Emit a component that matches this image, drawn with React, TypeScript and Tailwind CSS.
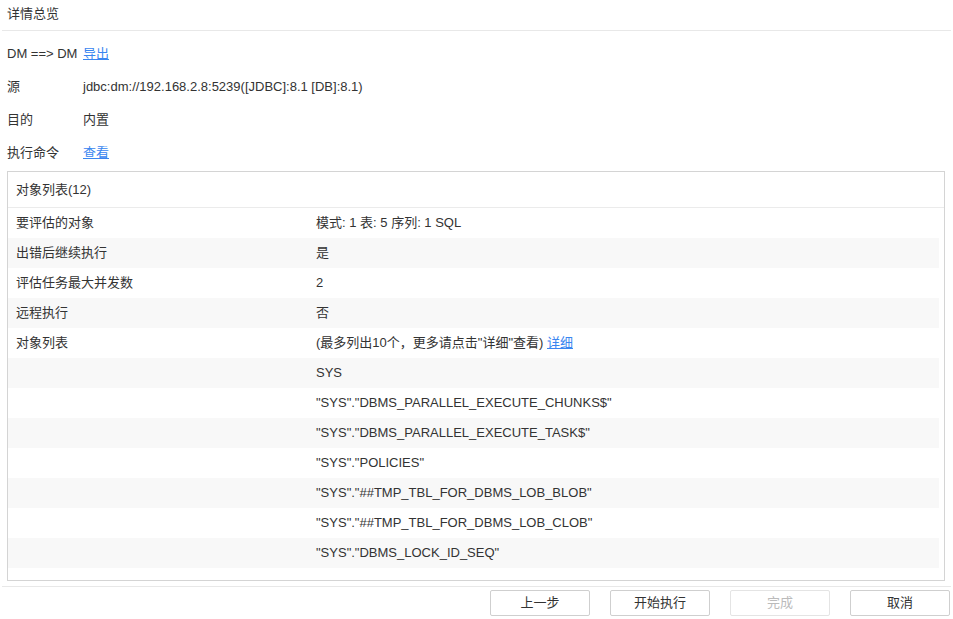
import React from 'react';

const font = { fontFamily: '"Liberation Sans", Arial, "Noto Sans CJK SC", sans-serif' };

const infoRows: { label: string; value: React.ReactNode }[] = [
  {
    label: 'DM ==> DM',
    value: <a className="text-[#3a86f0] underline cursor-pointer">导出</a>,
  },
  { label: '源', value: 'jdbc:dm://192.168.2.8:5239([JDBC]:8.1 [DB]:8.1)' },
  { label: '目的', value: '内置' },
  {
    label: '执行命令',
    value: <a className="text-[#3a86f0] underline cursor-pointer">查看</a>,
  },
];

const tableRows: { label: string; value: React.ReactNode }[] = [
  { label: '要评估的对象', value: '模式: 1 表: 5 序列: 1 SQL' },
  { label: '出错后继续执行', value: '是' },
  { label: '评估任务最大并发数', value: '2' },
  { label: '远程执行', value: '否' },
  {
    label: '对象列表',
    value: (
      <span>
        (最多列出10个，更多请点击"详细"查看){' '}
        <a className="text-[#3a86f0] underline cursor-pointer">详细</a>
      </span>
    ),
  },
  { label: '', value: 'SYS' },
  { label: '', value: '"SYS"."DBMS_PARALLEL_EXECUTE_CHUNKS$"' },
  { label: '', value: '"SYS"."DBMS_PARALLEL_EXECUTE_TASK$"' },
  { label: '', value: '"SYS"."POLICIES"' },
  { label: '', value: '"SYS"."##TMP_TBL_FOR_DBMS_LOB_BLOB"' },
  { label: '', value: '"SYS"."##TMP_TBL_FOR_DBMS_LOB_CLOB"' },
  { label: '', value: '"SYS"."DBMS_LOCK_ID_SEQ"' },
];

const buttons = [
  { text: '上一步', disabled: false },
  { text: '开始执行', disabled: false },
  { text: '完成', disabled: true },
  { text: '取消', disabled: false },
];

export default function App() {
  return (
    <div className="w-[953px] h-[619px] bg-white text-[13px] text-[#333] overflow-hidden" style={font}>
      <div className="mx-[2px]">
        {/* Title */}
        <div className="h-[31px] pt-[4px] pl-[5px] border-b border-[#e8e8e8]">详情总览</div>

        {/* Summary */}
        <div className="pt-[6px] pl-[5px]">
          {infoRows.map((r, i) => (
            <div key={i} className="flex items-center h-[33px]">
              <div className="w-[76px] shrink-0">{r.label}</div>
              <div>{r.value}</div>
            </div>
          ))}
        </div>

        {/* Object list panel */}
        <div className="mt-[2px] ml-[5px] mr-[6px] h-[410px] border border-[#d4d4d4]">
          <div className="h-[36px] flex items-center pl-[8px] border-b border-[#ebebeb]">对象列表(12)</div>
          <div className="pr-[5px]">
            {tableRows.map((r, i) => (
              <div
                key={i}
                className={`flex items-center h-[30px] pl-[8px] ${i % 2 === 1 ? 'bg-[#f8f8f8]' : 'bg-white'}`}
              >
                <div className="w-[300px] shrink-0">{r.label}</div>
                <div>{r.value}</div>
              </div>
            ))}
          </div>
        </div>

        {/* Footer */}
        <div className="mt-[5px] border-t border-[#e8e8e8] pt-[3px] flex justify-end gap-[20px] pr-[1px]">
          {buttons.map((b) => (
            <button
              key={b.text}
              className={`w-[100px] h-[26px] rounded-[2px] border bg-white ${
                b.disabled ? 'border-[#e4e4e4] text-[#bbb]' : 'border-[#cfcfcf] text-[#333]'
              }`}
            >
              {b.text}
            </button>
          ))}
        </div>
      </div>
    </div>
  );
}
